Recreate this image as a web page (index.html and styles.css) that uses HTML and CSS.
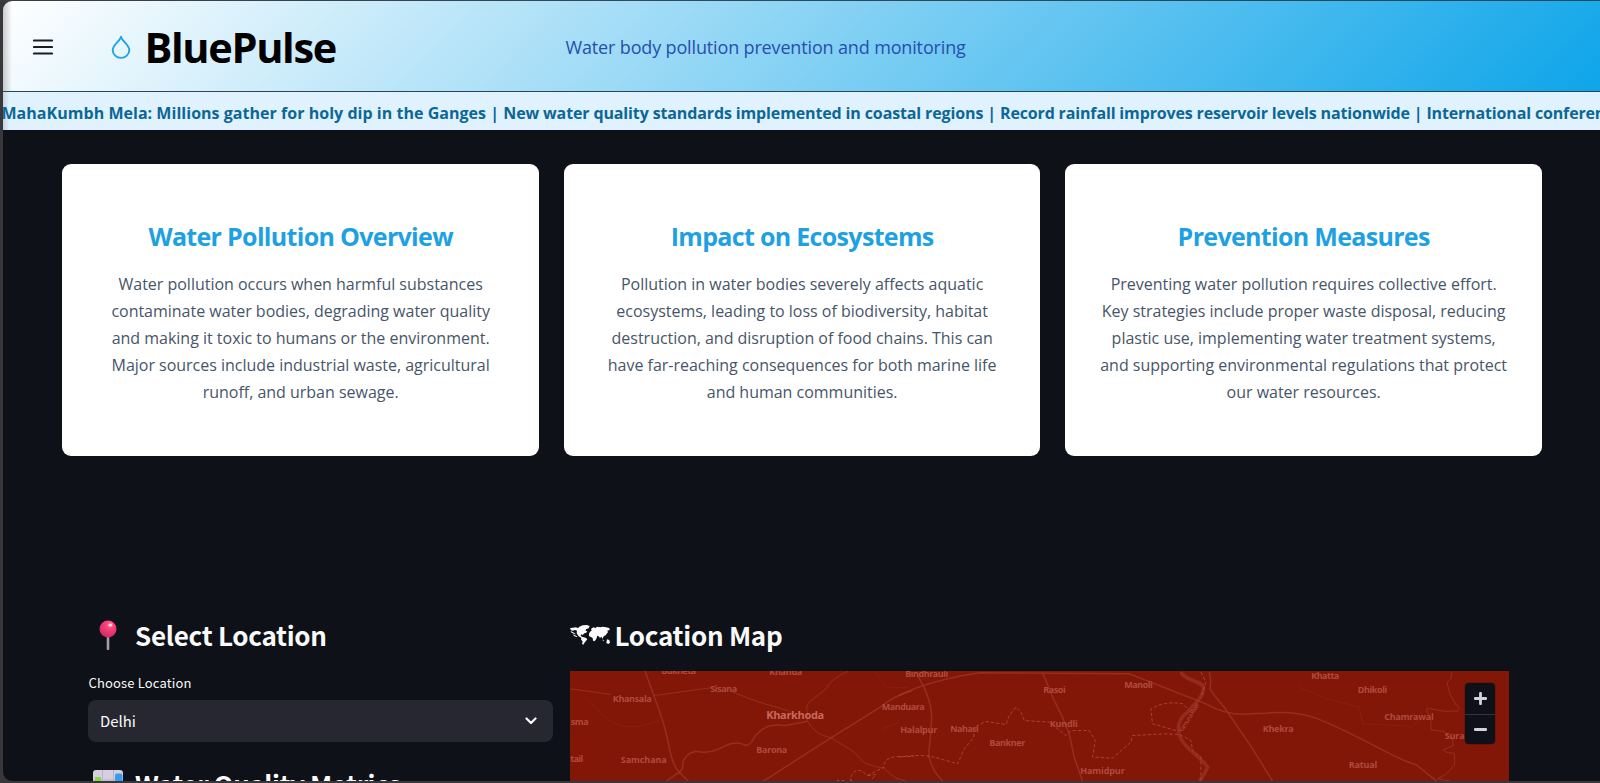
FILE: index.html
```html
<!DOCTYPE html>
<html lang="en">
<head>
<meta charset="utf-8">
<title>BluePulse</title>
<link rel="stylesheet" href="styles.css">
</head>
<body>
<div class="app">
  <header class="header">
    <svg class="menu" viewBox="0 0 20 16"><path d="M1 1.5h18M1 8h18M1 14.5h18"/></svg>
    <svg class="drop" viewBox="0 0 20 24"><path d="M10 1.600C9.200 6.200 1.700 9.400 1.700 15a8.300 7.900 0 0 0 16.600 0C18.300 9.400 10.800 6.200 10 1.600Z"/></svg>
    <h1 class="brand">BluePulse</h1>
    <p class="tagline">Water body pollution prevention and monitoring</p>
  </header>
  <div class="ticker"><span class="news-lead">MahaKumbh Mela: Millions gather for holy dip in the Ganges | </span><span class="news">New water quality standards implemented in coastal regions | </span><span class="news-tail">Record rainfall improves reservoir levels nationwide | International conference</span></div>
  <main class="main">
    <section class="cards">
      <article class="card">
        <h2 class="card-title">Water Pollution Overview</h2>
        <p class="card-text">Water pollution occurs when harmful substances<br>contaminate water bodies, degrading water quality<br>and making it toxic to humans or the environment.<br>Major sources include industrial waste, agricultural<br>runoff, and urban sewage.</p>
      </article>
      <article class="card">
        <h2 class="card-title">Impact on Ecosystems</h2>
        <p class="card-text">Pollution in water bodies severely affects aquatic<br>ecosystems, leading to loss of biodiversity, habitat<br>destruction, and disruption of food chains. This can<br>have far-reaching consequences for both marine life<br>and human communities.</p>
      </article>
      <article class="card">
        <h2 class="card-title">Prevention Measures</h2>
        <p class="card-text">Preventing water pollution requires collective effort.<br>Key strategies include proper waste disposal, reducing<br>plastic use, implementing water treatment systems,<br>and supporting environmental regulations that protect<br>our water resources.</p>
      </article>
    </section>
    <section class="panels">
      <div class="picker">
        <h3 class="heading">
          <svg class="pin" viewBox="0 0 40 34">
            <defs><radialGradient id="ball" cx=".62" cy=".25" r=".8"><stop offset="0" stop-color="#ff6d94"/><stop offset=".35" stop-color="#fb3f78"/><stop offset="1" stop-color="#c92a62"/></radialGradient></defs>
            <path d="M18.700 17h2.600v14.500q-1.300 1.200-2.600 0Z" fill="#a59bab"/>
            <circle cx="20" cy="11" r="8.500" fill="url(#ball)"/><ellipse cx="22.400" cy="7" rx="2" ry="1.600" fill="#ffd9e4"/>
          </svg>
          <span class="heading-text">Select Location</span>
        </h3>
        <label class="label">Choose Location</label>
        <div class="select"><span class="select-value">Delhi</span><svg class="chevron" viewBox="0 0 12 8"><path d="M1.500 1.500 6 6l4.500-4.500"/></svg></div>
        <h3 class="heading heading-metrics">
          <svg class="chart" viewBox="0 0 40 34">
            <rect x="5" y="2" width="30" height="30" rx="3" fill="#d5cfe0"/>
            <path d="M14.500 2v30M25.500 2v30M5 12h30M5 22h30" stroke="#b9b2c8"/>
            <rect x="7" y="9" width="6" height="23" rx="1" fill="#86d645"/><rect x="16.500" y="16" width="7" height="16" rx="1" fill="#f8312f"/><rect x="27" y="5.500" width="7.500" height="26" rx="2" fill="#3a9bea"/>
          </svg>
          <span class="heading-text metrics-text">Water Quality Metrics</span>
        </h3>
      </div>
      <div class="map-panel">
        <h3 class="heading">
          <svg class="world" viewBox="0 0 120 60">
            <path d="M0 9 9 8 16 7 25 9 28 5 38 1 50 0 59 3 56 10 48 13 47 17 52 19 48 24 43 25 38 30 33 28 32 33 38 36 47 38 52 43 47 49 43 54 40 59 36 57 38 50 33 43 34 38 28 35 23 30 20 24 21 17 15 15 8 17 3 16ZM2 18l10 5 6 5-7-2-8-4ZM10 28l13 7-4 1-8-4ZM57 26 60 20 65 17 63 12 70 7 77 9 81 5 91 7 99 5 108 7 118 9 119 15 112 17 114 22 110 26 107 31 101 34 98 41 94 35 90 39 86 34 82 32 80 39 77 45 73 49 69 47 68 39 62 36 57 33ZM95 43l8 4-3 1ZM111 43l7 2 2 8-5 4-6-3Z"/>
          </svg>
          <span class="heading-text">Location Map</span>
        </h3>
        <div class="map">
          <svg class="map-art" viewBox="571 670.500 938.500 111">
            <g transform="translate(560 600) scale(.3333)" class="road">
              <path class="major" d="M255 205 300 330Q320 385 330 440T360 515L395 550M310 550 360 515Q374 505 370 490 375 460 410 452 450 462 490 440T560 435C585 430 575 412 600 395 625 370 650 373 680 375T745 362"/>
              <path class="major" d="M600 550 815 412 960 322Q1005 285 1060 270"/>
              <path d="M745 362Q765 395 790 404L815 412 865 442Q890 455 908 482 930 497 975 503 990 520 1010 533L1050 545M745 338Q738 320 750 305L800 265Q815 235 870 210M745 362V338M520 275 600 305 690 332M33 265 155 282M285 285 455 262"/>
              <path class="faint" d="M90 308Q115 315 120 335 150 365 190 376T300 360M970 385 1020 365M950 215 980 260 1050 262"/>
              <path class="border" d="M875 530Q880 508 905 510L925 525 975 500Q970 475 1010 468L1065 468M925 525 950 522 935 540"/>
            </g>
            <g transform="translate(900 660) scale(.3333)" class="road">
              <path class="major" d="M0 105Q90 60 240 37L690 40 920 130Q980 165 1050 161M430 35 460 110 485 160 510 220 525 290 550 362M55 45Q100 120 97 180T88 275Q90 320 130 362"/>
              <path class="major" d="M930 35Q938 65 932 85 945 105 975 140L1050 250"/>
              <path class="river" d="M845 35C860 65 915 60 913 85S890 125 865 155C835 175 832 210 845 235 865 270 900 285 925 320Q915 345 900 362"/>
              <path class="border" d="M0 290Q60 280 105 290L175 310 195 265 220 235 235 195 260 183 320 192 330 165 350 140 365 155 375 180 450 185 500 225 515 210 570 210 588 240 580 290 640 293 695 245 700 225 800 220 840 222 875 240 880 270 905 290 905 362M830 210 760 190 755 145Q800 120 850 130L870 148M905 35 920 65 905 110"/>
            </g>
            <g transform="translate(1230 660) scale(.3333)" class="road">
              <path class="major" d="M60 160Q85 159 110 158 200 150 260 173T430 253 560 312L622 362M60 250 70 265 130 362"/>
              <path d="M668 33 665 55 653 65 662 100 680 133Q695 140 685 152 645 156 605 145 585 137 595 155 608 175 605 208L645 213 670 240 672 255 643 268Q645 278 675 278 678 305 675 315L650 342 625 355 665 362"/>
              <path class="faint" d="M210 80 260 100 290 115 390 140 400 190 510 195 550 200 570 175"/>
            </g>
            <g class="town">
              <text x="662" y="673.500" textLength="35">Bukheta</text><text x="770" y="674.500" textLength="33">Khanda</text><text x="711" y="691.500" textLength="27">Sisana</text>
              <text x="613.500" y="701.500" textLength="39">Khansala</text><text x="571.500" y="724.500" textLength="18">sma</text><text x="571" y="761" textLength="13">tail</text><text x="621.500" y="762.500" textLength="46">Samchana</text>
              <text class="city" x="767" y="718.500" textLength="58">Kharkhoda</text><text x="757" y="752" textLength="31">Barona</text><text x="882.500" y="709" textLength="43">Manduara</text>
              <text x="901" y="732" textLength="37">Halalpur</text><text x="951" y="731" textLength="28.500">Nahari</text><text x="990" y="745.500" textLength="36">Bankner</text><text x="906" y="676" textLength="43">Bindhrauli</text>
              <text x="1044" y="692" textLength="22.500">Rasoi</text><text x="1125" y="687" textLength="28.500">Manoli</text><text x="1050.500" y="726.500" textLength="28">Kundli</text><text x="1081" y="773" textLength="44.500">Hamidpur</text>
              <text x="837" y="785" textLength="55">Mukeempura</text><text x="1312" y="678" textLength="28">Khatta</text><text x="1358.500" y="692" textLength="29.500">Dhikoli</text><text x="1385" y="719.500" textLength="49.500">Chamrawal</text>
              <text x="1263.500" y="731" textLength="31">Khekra</text><text x="1349.500" y="767.500" textLength="28.500">Ratual</text><text x="1445.500" y="738" textLength="20">Sura</text>
              <text class="water" transform="translate(1183 732) rotate(-58)" textLength="33">Yamuna River</text>
            </g>
          </svg>
          <div class="zoom">
            <span class="zoom-btn"><svg viewBox="0 0 12 12"><path d="M6 1.200v9.600M1.200 6h9.600"/></svg></span>
            <span class="zoom-btn"><svg viewBox="0 0 12 12"><path d="M1.200 6h9.600"/></svg></span>
          </div>
        </div>
      </div>
    </section>
  </main>
</div>
</body>
</html>
```
FILE: styles.css
```css
* { box-sizing: border-box; margin: 0; padding: 0; }
svg { display: block; flex: none; }
body {
  width: 1600px; height: 783px; overflow: hidden;
  padding: 1px 0 2px 2.5px;
  background: linear-gradient(90deg, #3c3c3e, #2f4b5c 40%, #24495f) top / 100% 2px no-repeat, #38383b;
  font-family: "Open Sans", "Noto Sans", sans-serif;
}
.app {
  display: flex; flex-direction: column;
  height: 780px; overflow: hidden;
  border-radius: 9px 0 0 9px;
  background: #0e1117;
}
.header {
  display: flex; align-items: center;
  height: 91px; flex: none;
  border-bottom: 1px solid #2b4658;
  padding-left: 30.500px;
  background: linear-gradient(90deg, rgba(0,0,0,.2), transparent 9px), linear-gradient(135deg, #fff, #0ea5e9);
}
.menu { width: 20px; height: 16px; margin-top: 1px; }
.menu path { stroke: #1b1d26; stroke-width: 2.200; stroke-linecap: round; }
.drop { width: 20px; height: 24px; margin: 1px 0 0 58px; }
.drop path { fill: none; stroke: #1fa5e6; stroke-width: 1.900; stroke-linejoin: round; }
.brand { width: 421px; margin-left: 13.500px; padding-top: 2px; font-size: 41.500px; line-height: 56px; font-weight: 700; letter-spacing: -1.350px; color: #000; }
.tagline { padding-top: 1px; font-size: 18px; letter-spacing: -.150px; color: #254fae; white-space: nowrap; }
.ticker {
  height: 38px; flex: none; overflow: hidden;
  background: linear-gradient(90deg, rgba(0,0,0,.12), transparent 6px), #e0f2fe;
  color: #0c6796; font-size: 16px; line-height: 42px; font-weight: 700; white-space: pre;
}
.news-lead { letter-spacing: .030px; margin-left: -1px; }
.news { letter-spacing: -.130px; }
.news-tail { letter-spacing: -.150px; }
.main { flex: 1; display: flex; flex-direction: column; padding: 34px 0 0 59.900px; }
.cards { display: grid; grid-template-columns: repeat(3, 476.500px); column-gap: 25px; }
.card {
  height: 292px; padding-top: 54px;
  border-radius: 9px; background: #fff; text-align: center;
}
.card-title { font-size: 25px; line-height: 36px; font-weight: 700; letter-spacing: -.680px; color: #1da1e2; }
.card-text { margin-top: 17px; font-size: 16px; line-height: 27px; letter-spacing: -.015px; color: #475569; white-space: nowrap; }
.panels {
  display: grid; grid-template-columns: 465px 939px; column-gap: 17px;
  margin-top: 161px; padding-left: 26.100px;
  font-family: "Noto Sans CJK SC", sans-serif;
}
.heading { display: flex; align-items: center; height: 36px; font-size: 26px; font-weight: 700; color: #fafafa; }
.heading-text { line-height: 36px; white-space: nowrap; letter-spacing: -.270px; }
.metrics-text { margin-top: -2px; letter-spacing: -.420px; }
.pin, .chart { width: 40px; height: 34px; margin-right: 6.500px; }
.label { display: block; margin-top: 18px; font-size: 13px; line-height: 24px; font-weight: 400; letter-spacing: .150px; color: #fafafa; }
.select {
  display: flex; align-items: center; justify-content: space-between;
  height: 42px; margin-top: 5px; padding: 0 16px 2px 11.500px;
  border-radius: 8px; background: #262730;
  color: #fafafa; font-size: 14.900px;
}
.chevron { width: 12px; height: 8px; margin-top: 2px; }
.chevron path { fill: none; stroke: #fafafa; stroke-width: 2.200; stroke-linecap: round; stroke-linejoin: round; }
.heading-metrics { margin-top: 25px; }
.world { width: 40px; height: 20px; margin: 0 4.500px 0 -.500px; fill: #fafafa; }
.map { position: relative; height: 111px; margin-top: 17.500px; background: #821707; overflow: hidden; }
.map-art { width: 939px; height: 111px; }
.road path { fill: none; stroke: #a13b2c; stroke-width: 3; opacity: .65; }
.road .major { stroke-width: 4.500; }
.road .faint { opacity: .22; }
.road .river { stroke: #9f392c; stroke-width: 11; opacity: .6; }
.road .border { stroke: #b84f3e; stroke-dasharray: 10 6; opacity: .75; }
.town { font: 700 9px "Open Sans", sans-serif; fill: #b04a3e; }
.city { font-size: 11px; fill: #c7695d; }
.water { font-size: 6px; font-weight: 400; fill: #b95549; }
.zoom { position: absolute; top: 12.500px; right: 14px; width: 30px; border-radius: 4px; background: #0e1117; box-shadow: 0 0 0 1px rgba(0,0,0,.15); }
.zoom-btn { display: flex; align-items: center; justify-content: center; height: 30.500px; }
.zoom-btn + .zoom-btn { border-top: 1px solid #33363c; }
.zoom svg { width: 13px; height: 13px; stroke: #d2d3d4; stroke-width: 2.600; stroke-linecap: round; }
```
